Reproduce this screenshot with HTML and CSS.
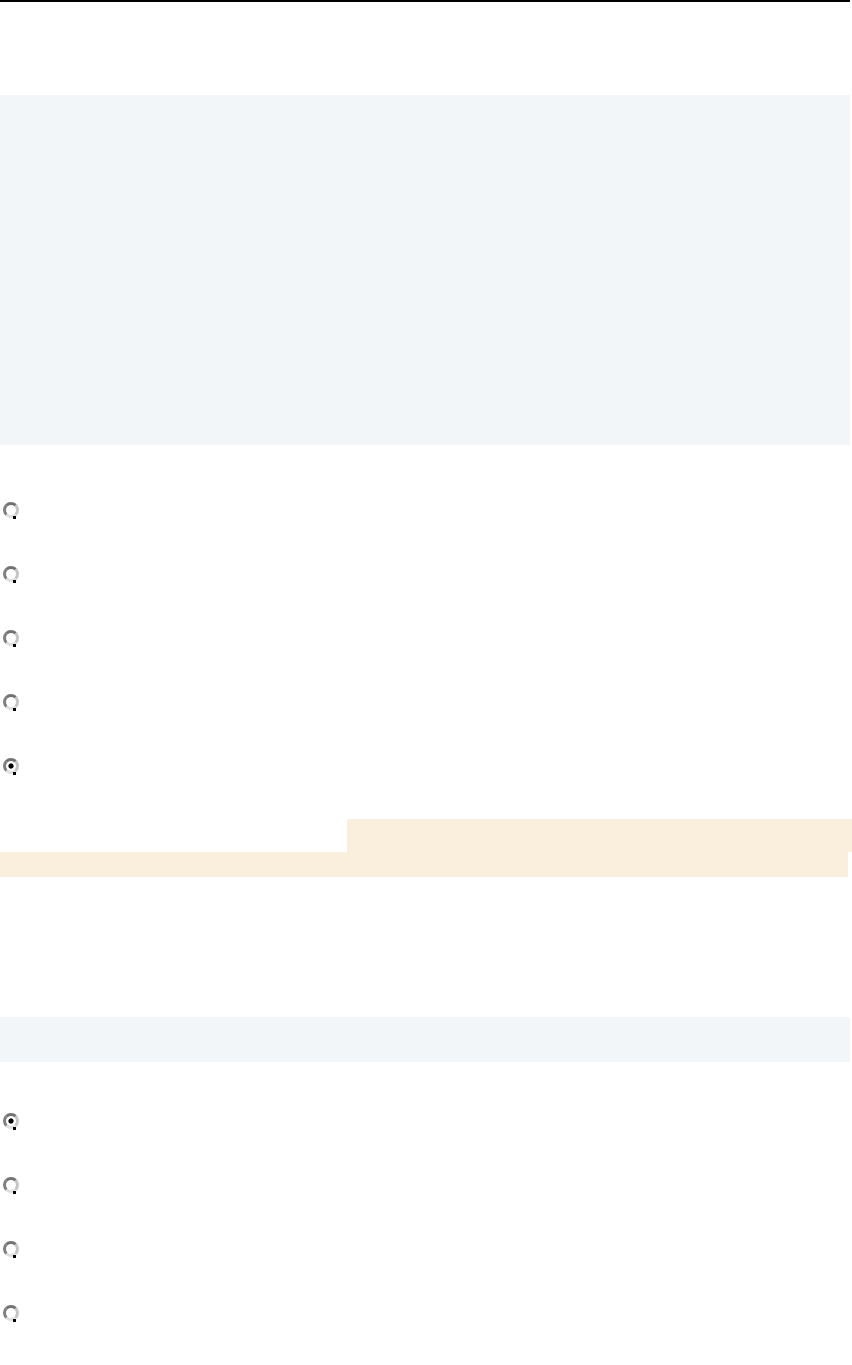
FILE: index.html
```html
<!DOCTYPE html>
<html>
<head>
<meta charset="utf-8">
<link rel="stylesheet" href="styles.css">
</head>
<body>
<div class="page">
  <div class="topline"></div>
  <div class="panel panel-large"></div>
  <div class="options options-first">
    <label class="option"><input type="radio" name="q1"></label>
    <label class="option"><input type="radio" name="q1"></label>
    <label class="option"><input type="radio" name="q1"></label>
    <label class="option"><input type="radio" name="q1"></label>
    <label class="option"><input type="radio" name="q1" checked></label>
  </div>
  <div class="highlight">
    <div class="hl-top"></div>
    <div class="hl-bottom"></div>
  </div>
  <div class="panel panel-small"></div>
  <div class="options options-second">
    <label class="option"><input type="radio" name="q2" checked></label>
    <label class="option"><input type="radio" name="q2"></label>
    <label class="option"><input type="radio" name="q2"></label>
    <label class="option"><input type="radio" name="q2"></label>
  </div>
</div>
</body>
</html>
```

FILE: styles.css
```css
html, body {
  margin: 0;
  padding: 0;
  background: #ffffff;
  font-family: "Liberation Sans", Arial, sans-serif;
}

.page {
  width: 852px;
  display: flex;
  flex-direction: column;
}

.topline {
  width: 850px;
  height: 2px;
  background: #000000;
}

.panel {
  width: 850px;
  background: #f2f6f9;
}

.panel-large {
  margin-top: 93px;
  height: 350px;
}

.options {
  display: flex;
  flex-direction: column;
}

.options-first {
  margin-top: 56px;
}

.option {
  display: flex;
  align-items: flex-start;
  height: 64px;
}

.option input {
  -webkit-appearance: none;
  appearance: none;
  position: relative;
  box-sizing: border-box;
  margin: 1px 3px 0 3px;
  width: 16px;
  height: 16px;
  border-radius: 50%;
  border: 3px solid;
  border-color: #727272 #c6c6c6 #e0e0e0 #808080;
  background: #ffffff;
}

.option input:checked {
  background: radial-gradient(circle at 50% 50%, #000000 0, #000000 2.2px, #ffffff 3px);
}

.option input::after {
  content: "";
  position: absolute;
  right: 0;
  bottom: -4px;
  width: 3px;
  height: 3px;
  background: #000000;
}

.highlight {
  margin-top: -2px;
  display: flex;
  flex-direction: column;
}

.hl-top {
  margin-left: 347px;
  width: 505px;
  height: 33px;
  background: #faeedc;
}

.hl-bottom {
  width: 848px;
  height: 25px;
  background: #faeedc;
}

.panel-small {
  margin-top: 140px;
  height: 45px;
}

.options-second {
  margin-top: 50px;
}
```
